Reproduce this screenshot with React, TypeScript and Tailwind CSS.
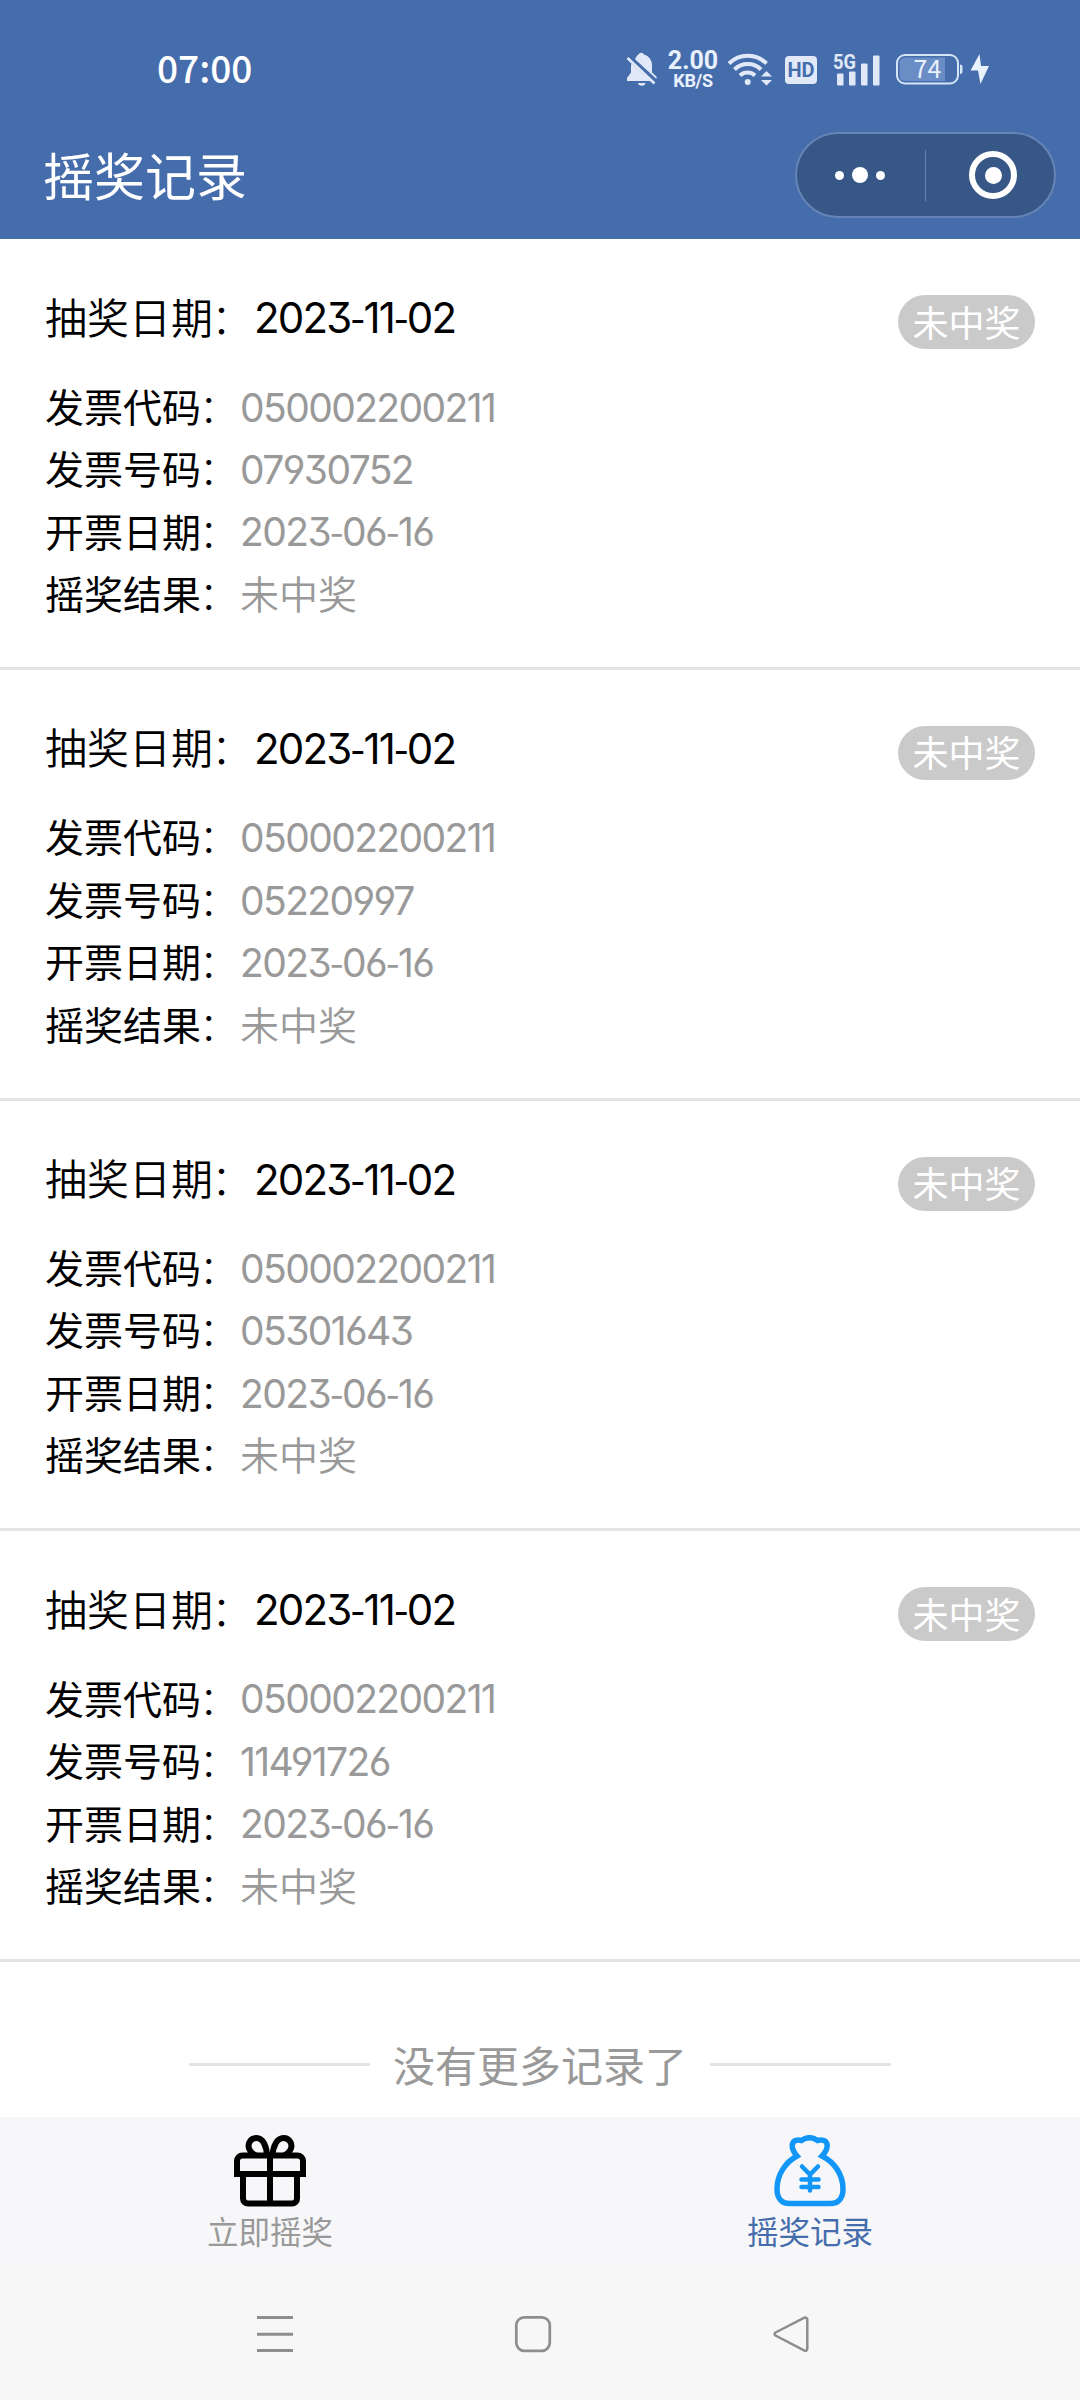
// App.tsx
import React from 'react';

interface LotteryRecord {
    drawDate: string;
    code: string;
    number: string;
    invoiceDate: string;
    result: string;
}

const records: LotteryRecord[] = [
    { drawDate: '2023-11-02', code: '050002200211', number: '07930752', invoiceDate: '2023-06-16', result: '未中奖' },
    { drawDate: '2023-11-02', code: '050002200211', number: '05220997', invoiceDate: '2023-06-16', result: '未中奖' },
    { drawDate: '2023-11-02', code: '050002200211', number: '05301643', invoiceDate: '2023-06-16', result: '未中奖' },
    { drawDate: '2023-11-02', code: '050002200211', number: '11491726', invoiceDate: '2023-06-16', result: '未中奖' },
];

const BellOff = () => (
    <svg width="31" height="35" viewBox="0 0 31 35" fill="#e1e9f8">
        <path d="M12.500 2.500a3 3 0 0 1 5.500 0C23 4 26 8 26 13v7.500l4.500 4V27L9 7.200C10 5 11 3.500 12.500 2.500z" />
        <path d="M5.500 11.500L24.500 29H1v-3l4-5.500v-7z" />
        <path d="M1.500 6L28.500 31.500" stroke="#e1e9f8" strokeWidth="2.800" />
        <path d="M12 31h7.500a3.800 3.300 0 0 1-7.500 0z" />
    </svg>
);

const Wifi = () => (
    <svg width="46" height="36" viewBox="0 0 46 36" fill="none" stroke="#e1e9f8" strokeWidth="4">
        <path d="M2 12.500a26.500 26.500 0 0 1 37.500 0" />
        <path d="M7.500 18.500a19 19 0 0 1 26.500 0" />
        <path d="M13 24.500a11 11 0 0 1 15 0" />
        <circle cx="20.700" cy="31" r="3" fill="#e1e9f8" stroke="none" />
        <path d="M34 25.500l5.500-5.500 5.500 5.500zM34 29h11l-5.500 5.500z" fill="#e1e9f8" stroke="none" />
    </svg>
);

const Battery = () => (
    <svg className="overflow-visible" width="68" height="31" viewBox="0 0 68 31">
        <rect x="1" y="1" width="61" height="28.500" rx="8" fill="none" stroke="#d5e5f8" strokeWidth="2" />
        <path d="M9 3.500h40v23.500H9a5.500 5.500 0 0 1-5.500-5.500V9A5.500 5.500 0 0 1 9 3.500z" fill="#6b8dc6" />
        <path d="M64 10.500a2.500 2.500 0 0 1 2.500 2.500v4.500a2.500 2.500 0 0 1-2.500 2.500z" fill="#d5e5f8" />
        <text x="31.500" y="23.500" textAnchor="middle" className="text-[25px]" fill="#e9f1fd">74</text>
    </svg>
);

const StatusBar = () => (
    <div className="flex h-[112px] items-center pt-[26px] pl-[157px] text-[#e9f1fd]">
        <div className="w-[469px] pb-[4px] text-[37px] leading-none font-medium text-white">07:00</div>
        <BellOff />
        <div className="mt-[3px] ml-[9px] flex w-[54px] flex-col items-center font-[Roboto] font-bold">
            <span className="text-[25px] leading-[20px]">2.00</span>
            <span className="text-[18px] leading-[20px] tracking-[-0.3px]">KB/S</span>
        </div>
        <div className="ml-[7px]">
            <Wifi />
        </div>
        <div className="mt-[2px] ml-[12px] flex h-[28px] w-[32px] items-center justify-center rounded-[4px] bg-[#e1e9f8] font-[Roboto] text-[20px] font-bold text-[#456cab]">
            HD
        </div>
        <svg className="ml-[16px] overflow-visible" width="49" height="36" viewBox="0 0 49 36" fill="#e1e9f8">
            <text x="0" y="18" className="font-[Roboto] text-[21px] font-bold" textLength="23" lengthAdjust="spacingAndGlyphs">5G</text>
            <rect x="4" y="22.500" width="6.500" height="12" rx="1" />
            <rect x="16" y="20.500" width="6.500" height="14" rx="1" />
            <rect x="28" y="12.500" width="6.500" height="22" rx="1" />
            <rect x="40" y="4.500" width="6.500" height="30" rx="1" />
        </svg>
        <div className="ml-[14px]">
            <Battery />
        </div>
        <svg className="ml-[6px]" width="19" height="32" viewBox="0 0 19 32" fill="#e9f1fd">
            <path d="M9.500 1L.5 17.500h7.500L10.500 31 19 13h-8z" />
        </svg>
    </div>
);

const Capsule = () => (
    <div className="flex h-[86px] w-[261px] items-center rounded-full border-2 border-[#6684b5] bg-[#375787]">
        <div className="flex w-[128px] items-center justify-center gap-[8px] pr-[2px]">
            <i className="size-[9px] rounded-full bg-white" />
            <i className="size-[16px] rounded-full bg-white" />
            <i className="size-[9px] rounded-full bg-white" />
        </div>
        <div className="h-[51px] w-px bg-[#6684b5]" />
        <div className="flex flex-1 justify-center pl-[6px]">
            <div className="flex size-[48px] items-center justify-center rounded-full border-[6px] border-white">
                <i className="size-[17px] rounded-full bg-white" />
            </div>
        </div>
    </div>
);

// Dates use the short hyphen of the CJK font between the Inter digits
const DateText: React.FC<{ value: string }> = ({ value }) => (
    <>
        {value.split('-').map((part, index) => (
            <React.Fragment key={index}>
                {index > 0 && <span className="font-['Noto_Sans_CJK_SC',sans-serif] leading-none">-</span>}
                {part}
            </React.Fragment>
        ))}
    </>
);

const Field: React.FC<{ label: string; value: string }> = ({ label, value }) => (
    <div className="flex h-[62.4px] items-center text-[39px]">
        <span>{label}</span>
        <span className="mr-[2px] -ml-[2px] font-light">：</span>
        {value === '未中奖' ? (
            <span className="font-[350] text-[#999999]">{value}</span>
        ) : (
            <span className="pb-px leading-[48px] tracking-[-1.6px] text-[#999999]">
                <DateText value={value} />
            </span>
        )}
    </div>
);

const RecordCard: React.FC<{ record: LotteryRecord }> = ({ record }) => (
    <div className="h-[430.67px] border-b-[3px] border-[#e4e4e4] px-[45px] pt-[47px]">
        <div className="flex h-[64px] items-start justify-between text-[42px]">
            <div className="flex h-[64px] items-center">
                <span className="font-[350]">抽奖日期</span>
                <span className="mr-px -ml-[2px] font-light">：</span>
                <span className="leading-[52px] tracking-[-1.8px]">
                    <DateText value={record.drawDate} />
                </span>
            </div>
            <div className="mt-[9px] flex h-[54px] w-[137px] items-center justify-center rounded-full bg-[#cacaca] pt-[3px] text-[36px] text-white">
                {record.result}
            </div>
        </div>
        <div className="pt-[26.5px]">
            <Field label="发票代码" value={record.code} />
            <Field label="发票号码" value={record.number} />
            <Field label="开票日期" value={record.invoiceDate} />
            <Field label="摇奖结果" value={record.result} />
        </div>
    </div>
);

const GiftIcon = () => (
    <svg width="72" height="72" viewBox="0 0 72 72" fill="none" stroke="#000" strokeWidth="6">
        <path d="M3 42V26a5.500 5.500 0 0 1 5.500-5.500h55A5.500 5.500 0 0 1 69 26v16" />
        <path d="M0 39h72M36 20v48" />
        <path d="M9 41v22.500a5 5 0 0 0 5 5h44a5 5 0 0 0 5-5V41" />
        <path d="M33 20.500C32.500 11 29 3 22.500 3 16 3 12.500 10 16 15.500c1.500 2.500 3.500 4 6 5M38.500 20.500C39 11 43 3 49.500 3 56 3 59.500 10 56 15.500c-1.500 2.500-3.500 4-6 5" />
    </svg>
);

const MoneyBagIcon = () => (
    <svg width="72" height="72" viewBox="0 0 72 72" fill="none" stroke="#1296f8" strokeWidth="5.500" strokeLinecap="round">
        <path d="M23 21C19.500 17 17.500 13 18.500 9c1-4 5-4.500 9-3.500 5-3.500 11-3.500 16 0 4-1 8.500-.500 9.500 3.500 1 4-1.500 8-5 12C60 27 69 39 69 54c0 9-4.500 14.500-12.500 14.500h-41C7.500 68.500 3 63 3 54c0-15 9-27 20-33z" />
        <path d="M28 31.500l8 8 8-8M27.500 44.500h17M27.500 52h17M36 39.500v16" strokeWidth="4.500" />
    </svg>
);

const TabBar = () => (
    <div className="flex h-[150px] bg-[#f7f7fa] text-[31.5px] leading-[46px]">
        <div className="flex flex-1 flex-col items-center pt-[18px] text-[#999999]">
            <GiftIcon />
            <span>立即摇奖</span>
        </div>
        <div className="flex flex-1 flex-col items-center pt-[18px] text-[#456cab]">
            <MoneyBagIcon />
            <span>摇奖记录</span>
        </div>
    </div>
);

const SystemNav = () => (
    <div className="flex flex-1 items-start bg-[#f7f7f7] pt-[48px] pl-[256px]">
        <svg width="38" height="38" viewBox="0 0 38 38" stroke="#8e8e8e" strokeWidth="3">
            <path d="M1 2.500h36M1 19.200h36M1 35.500h36" />
        </svg>
        <svg className="ml-[220px]" width="38" height="38" viewBox="0 0 38 38" fill="none" stroke="#8e8e8e" strokeWidth="2.700">
            <rect x="2.300" y="2.300" width="33.500" height="33.500" rx="8" />
        </svg>
        <svg className="ml-[221px]" width="38" height="38" viewBox="0 0 38 38" fill="none" stroke="#8e8e8e" strokeWidth="2.500">
            <path d="M2.500 17.500L31 2.800c1.800-.8 3.300.2 3.300 2v28.800c0 1.800-1.500 2.800-3.300 1.800L2.500 20.500c-1.200-.8-1.200-2.200 0-3z" />
        </svg>
    </div>
);

const App: React.FC = () => (
    <div className="flex h-[2400px] w-[1080px] flex-col overflow-hidden bg-white font-['Noto_Sans_CJK_SC',sans-serif] text-black">
        <header className="h-[239.33px] bg-[#456cab]">
            <StatusBar />
            <div className="flex h-[126px] items-center justify-between pr-[24px] pl-[43px]">
                <h1 className="pb-[2px] text-[51px] leading-none text-white">摇奖记录</h1>
                <Capsule />
            </div>
        </header>
        <main className="flex h-[1877.67px] flex-col font-[Inter,'Noto_Sans_CJK_SC',sans-serif] [font-feature-settings:'cv03','cv04','cv09']">
            {records.map((record, index) => (
                <RecordCard key={index} record={record} />
            ))}
            <div className="flex items-center justify-center gap-[23px] pt-[69px] text-[42px] text-[#999999]">
                <div className="h-[3px] w-[181px] bg-[#e4e4e4]" />
                <span className="pt-[4px]">没有更多记录了</span>
                <div className="h-[3px] w-[181px] bg-[#e4e4e4]" />
            </div>
        </main>
        <TabBar />
        <SystemNav />
    </div>
);

export default App;
